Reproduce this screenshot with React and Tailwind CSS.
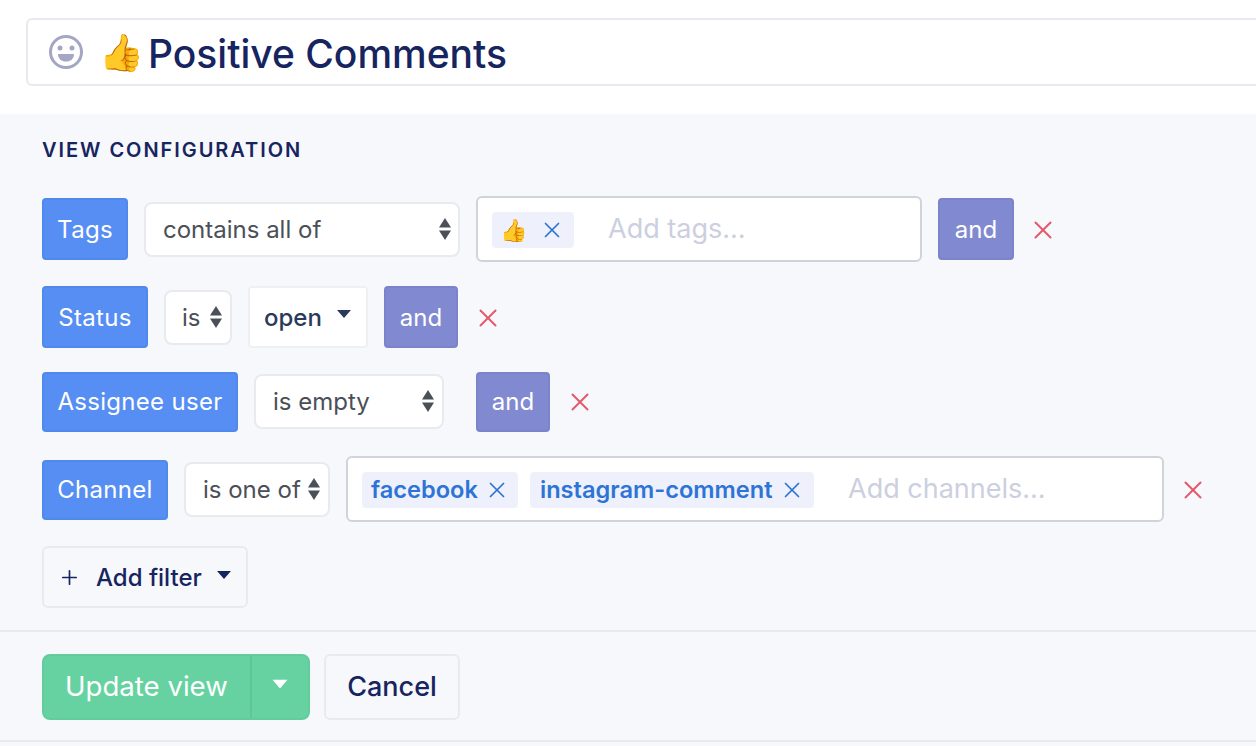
import { Plus, X } from "lucide-react";

function Label({ children, className = "" }) {
  return (
    <div className={`flex items-center justify-center rounded-[4px] border-2 border-[#4f89ec] bg-[#568ef3] text-[24px] tracking-[0.3px] text-white ${className}`}>
      {children}
    </div>
  );
}

function AndButton({ className = "" }) {
  return (
    <div className={`flex items-center justify-center rounded-[4px] border-2 border-[#7b84cb] bg-[#8189d0] text-[24px] text-white ${className}`}>
      and
    </div>
  );
}

function Remove({ className = "" }) {
  return <X className={`h-[30px] w-[30px] text-[#e5596b] ${className}`} strokeWidth={1.6} />;
}

function Arrows({ className = "" }) {
  return (
    <svg className={className} width="12" height="22" viewBox="0 0 12 22">
      <path d="M6 0L12 9.500H0Z" fill="#4b5058" />
      <path d="M6 22L0 12.500H12Z" fill="#4b5058" />
    </svg>
  );
}

function Caret({ color, className = "" }) {
  return (
    <svg className={className} width="14" height="8" viewBox="0 0 14 8">
      <path d="M0 0H14L7 8Z" fill={color} />
    </svg>
  );
}

function NativeSelect({ children, className = "" }) {
  return (
    <div className={`flex h-[55px] items-center justify-between rounded-[8px] border-2 border-[#e8eaef] bg-white text-[24px] text-[#4b5058] ${className}`}>
      <span className="pt-[2px]">{children[0]}</span>
      {children[1]}
    </div>
  );
}

function Chip({ children, className = "" }) {
  return (
    <div className={`mt-[2px] flex h-[36px] items-center rounded-[4px] bg-[#eef1fc] text-[23.600px] font-semibold text-[#2d74d6] ${className}`}>
      {children}
      <X className="h-[26px] w-[26px] shrink-0 text-[#2d74d6]" strokeWidth={1.6} />
    </div>
  );
}

export default function App() {
  return (
    <div className="h-[746px] w-[1256px] overflow-hidden bg-white font-['Inter',sans-serif] text-[#16245f]">
      <div className="h-[114px] pt-[18px] pl-[26px]">
        <div className="flex h-[68px] w-[1300px] items-center rounded-[6px] border-2 border-[#e8eaef] bg-white pl-[20px]">
          <svg width="36" height="36" viewBox="0 0 36 36" fill="none">
            <circle cx="18" cy="18" r="15.500" stroke="#a3a7c4" strokeWidth="3" />
            <circle cx="12" cy="14" r="2.500" fill="#a3a7c4" />
            <circle cx="24" cy="14" r="2.500" fill="#a3a7c4" />
            <path d="M10 20H26C26 25 22.500 27.500 18 27.500C13.500 27.500 10 25 10 20Z" fill="#a3a7c4" />
          </svg>
          <div className="ml-[15px] flex items-center pt-[3px] text-[39px] leading-none font-medium whitespace-nowrap">
            <span className="mb-[3px] text-[36px]">👍</span>
            <span className="ml-[4px]">Positive Comments</span>
          </div>
        </div>
      </div>

      <div className="h-[632px] bg-[#f6f8fc]">
        <div className="h-[518px] border-b-2 border-[#e8eaef] pt-[26px] pl-[42px]">
          <div className="text-[20px] leading-[20px] font-semibold tracking-[1.950px]">VIEW CONFIGURATION</div>

          <div className="mt-[36px] flex h-[66px] items-center">
            <Label className="h-[62px] w-[86px] pt-[2px]">Tags</Label>
            <NativeSelect className="ml-[16px] w-[316px] pr-[7px] pl-[17px]">
              {"contains all of"}
              <Arrows />
            </NativeSelect>
            <div className="ml-[16px] flex h-[66px] w-[446px] items-center rounded-[6px] border-2 border-[#d1d3da] bg-white pl-[14px]">
              <Chip className="w-[82px] pl-[8px]">
                <span className="mr-[12px] w-[27px] text-[22px] font-normal">👍</span>
              </Chip>
              <span className="ml-[34px] text-[27px] text-[#cbcfe0]">Add tags...</span>
            </div>
            <AndButton className="ml-[16px] h-[62px] w-[76px] pt-[2px]" />
            <Remove className="mt-[2px] ml-[14px]" />
          </div>

          <div className="mt-[24px] flex h-[62px] items-center">
            <Label className="h-[62px] w-[106px] pt-[2px]">Status</Label>
            <NativeSelect className="ml-[16px] w-[68px] pr-[8px] pl-[16px]">
              {"is"}
              <Arrows />
            </NativeSelect>
            <div className="ml-[16px] flex h-[62px] w-[120px] items-center rounded-[4px] border-2 border-[#eef0f4] bg-white pl-[14px] text-[24px] font-medium text-[#2a3a5c]">
              <span className="pt-[2px]">open</span>
              <Caret color="#2a3a5c" className="mb-[6px] ml-[15px]" />
            </div>
            <AndButton className="ml-[16px] h-[62px] w-[74px] pt-[2px]" />
            <Remove className="mt-[2px] ml-[15px]" />
          </div>

          <div className="mt-[24px] flex h-[60px] items-center">
            <Label className="h-[60px] w-[196px]">Assignee user</Label>
            <NativeSelect className="-mt-[2px] ml-[16px] w-[190px] pr-[8px] pl-[17px]">
              {"is empty"}
              <Arrows />
            </NativeSelect>
            <AndButton className="ml-[32px] h-[60px] w-[74px]" />
            <Remove className="ml-[15px]" />
          </div>

          <div className="mt-[24px] flex h-[66px] items-center">
            <Label className="mt-[2px] h-[60px] w-[126px]">Channel</Label>
            <NativeSelect className="ml-[16px] w-[146px] pr-[8px] pl-[17px]">
              {"is one of"}
              <Arrows />
            </NativeSelect>
            <div className="ml-[16px] flex h-[66px] w-[818px] items-center rounded-[6px] border-2 border-[#d1d3da] bg-white pl-[14px]">
              <Chip className="w-[156px] pl-[9px]">
                <span className="mr-[6px]">facebook</span>
              </Chip>
              <Chip className="ml-[12px] w-[284px] pl-[10px]">
                <span className="mr-[6px] whitespace-nowrap">instagram-comment</span>
              </Chip>
              <span className="ml-[34px] text-[27px] text-[#cbcfe0]">Add channels...</span>
            </div>
            <Remove className="mt-[2px] ml-[14px]" />
          </div>

          <div className="mt-[24px] flex h-[62px] w-[206px] items-center rounded-[6px] border-2 border-[#e8eaef] pl-[14px] text-[24px] font-medium">
            <Plus className="h-[23px] w-[23px]" strokeWidth={1.75} />
            <span className="ml-[15px] pt-[2px]">Add filter</span>
            <Caret color="#16245f" className="mb-[4px] ml-[15px]" />
          </div>
        </div>

        <div className="h-[110px] border-b-2 border-[#e8eaef] pt-[22px] pl-[42px]">
          <div className="flex">
            <div className="flex h-[66px] w-[268px] overflow-hidden rounded-[8px] border-2 border-[#62cd9b] bg-[#67d2a1] text-[27.600px] text-white">
              <div className="flex w-[208px] items-center border-r-2 border-[#5ec796] pl-[21px]">Update view</div>
              <div className="flex flex-1 items-center justify-center">
                <Caret color="#ffffff" className="mb-[6px] scale-110" />
              </div>
            </div>
            <div className="ml-[14px] flex h-[66px] w-[136px] items-center justify-center rounded-[6px] border-2 border-[#e8eaef] text-[27px] font-medium">
              Cancel
            </div>
          </div>
        </div>
      </div>
    </div>
  );
}
